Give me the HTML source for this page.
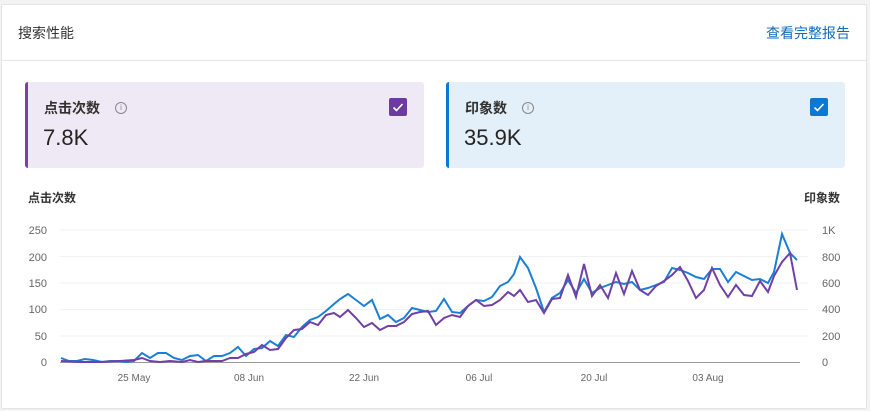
<!DOCTYPE html>
<html><head><meta charset="utf-8"><style>
body{margin:0;width:870px;height:411px;background:#f3f3f3;font-family:"Liberation Sans","Noto Sans CJK SC",sans-serif;overflow:hidden;position:relative}
.card{position:absolute;left:1px;top:4px;width:864px;height:403px;background:#fff;border:1px solid #e4e4e4;border-radius:2px}
.hd{position:absolute;left:0;top:0;right:0;height:55px;border-bottom:1px solid #e6e6e6}
.t{position:absolute;font-size:14px;color:#333}
.m{position:absolute;top:77px;width:396px;height:86px;border-radius:3px}
.m .n{position:absolute;left:16px;top:16px;font-size:14px;font-weight:bold;color:#323130}
.m .v{position:absolute;left:15px;top:43px;font-size:22px;color:#252423}
.m .i{position:absolute;top:20px;width:10px;height:10px;border:1px solid #888;border-radius:50%;font-size:8px;line-height:10px;text-align:center;color:#888}
.m .cb{position:absolute;right:17px;top:16px;width:18px;height:18px;border-radius:2px}
</style></head><body>
<div class="card">
<div class="hd"></div>
<div class="t" style="left:16px;top:18px">搜索性能</div>
<div class="t" style="right:16px;top:18px;color:#0f6cbd">查看完整报告</div>
<div class="m" style="left:23px;background:#efe9f5;border-left:3px solid #7a40a8">
<div class="n">点击次数</div><div class="i" style="left:87px">i</div><div class="v">7.8K</div>
<div class="cb" style="background:#6c3aa0"><svg width="18" height="18"><path d="M4.5 9.5l3 3 6-6.5" stroke="#fff" stroke-width="1.6" fill="none"/></svg></div></div>
<div class="m" style="left:444px;background:#e3eff9;border-left:3px solid #0b78d4">
<div class="n">印象数</div><div class="i" style="left:73px">i</div><div class="v">35.9K</div>
<div class="cb" style="background:#0b78d4"><svg width="18" height="18"><path d="M4.5 9.5l3 3 6-6.5" stroke="#fff" stroke-width="1.6" fill="none"/></svg></div></div>
</div>
<svg width="870" height="411" style="position:absolute;left:0;top:0" font-family="Liberation Sans,Noto Sans CJK SC,sans-serif">
<text x="28" y="202" font-size="12" font-weight="bold" fill="#333">点击次数</text>
<text x="840" y="202" font-size="12" font-weight="bold" fill="#333" text-anchor="end">印象数</text>
<g stroke="#f2f2f2"><line x1="60" x2="808" y1="230" y2="230"/><line x1="60" x2="808" y1="256.5" y2="256.5"/><line x1="60" x2="808" y1="283" y2="283"/><line x1="60" x2="808" y1="309.5" y2="309.5"/><line x1="60" x2="808" y1="336" y2="336"/></g>
<line x1="60" x2="800" y1="362.5" y2="362.5" stroke="#999"/>
<g font-size="11" fill="#666" text-anchor="end"><text x="47" y="234">250</text><text x="47" y="261">200</text><text x="47" y="287">150</text><text x="47" y="313">100</text><text x="47" y="340">50</text><text x="47" y="366">0</text></g>
<g font-size="11" fill="#666"><text x="822" y="234">1K</text><text x="822" y="261">800</text><text x="822" y="287">600</text><text x="822" y="313">400</text><text x="822" y="340">200</text><text x="822" y="366">0</text></g>
<g font-size="10" fill="#666" text-anchor="middle"><text x="134" y="381">25 May</text><text x="249" y="381">08 Jun</text><text x="364" y="381">22 Jun</text><text x="479" y="381">06 Jul</text><text x="594" y="381">20 Jul</text><text x="708" y="381">03 Aug</text></g>
<polyline fill="none" stroke="#1a7fd6" stroke-width="2" points="61,358 69,361 77,361 85,359 93,360 102,362 110,361 118,361 126,362 134,361 142,353 150,358 158,353 166,353 174,358 182,360 190,356 198,355 206,361 214,356 222,356 230,353 238,347 246,356 254,349 262,348 270,341 278,346 286,335 294,337 302,327 310,320 318,317 326,311 334,304 340,299 348,294 356,300 364,306 372,300 380,319 388,315 396,322 404,318 412,308 420,310 428,312 436,311 444,299 452,312 460,313 468,306 476,300 484,301 492,297 500,286 508,282 514,274 520,257 528,268 536,288 544,312 552,298 560,293 568,280 576,293 584,279 592,293 600,288 608,285 616,282 624,284 632,282 640,290 648,288 656,285 664,282 672,268 680,270 688,273 696,277 704,279 712,269 720,269 728,282 736,272 744,276 752,280 760,279 768,283 774,272 782,234 790,253 797,260"/>
<polyline fill="none" stroke="#7140a6" stroke-width="2" points="61,361 80,362 100,362 120,361 134,360 142,358 150,361 160,362 170,361 182,362 190,360 198,362 206,361 214,361 222,361 230,358 238,358 246,354 254,352 262,345 270,350 278,349 286,338 294,330 302,329 310,322 318,325 326,315 334,313 340,317 348,310 356,318 364,327 372,323 380,330 388,326 396,326 404,322 412,314 420,312 428,311 436,325 444,318 452,315 460,317 468,306 476,300 484,306 492,305 500,300 508,292 514,296 520,290 528,302 536,300 544,313 552,299 560,298 568,275 576,297 584,264 592,296 600,285 608,298 616,273 624,294 632,271 640,290 648,295 656,286 664,281 672,275 680,267 688,281 696,298 704,290 712,268 720,285 728,297 736,285 744,295 752,296 760,281 768,292 774,276 782,262 790,253 797,290"/>
</svg>
</body></html>
